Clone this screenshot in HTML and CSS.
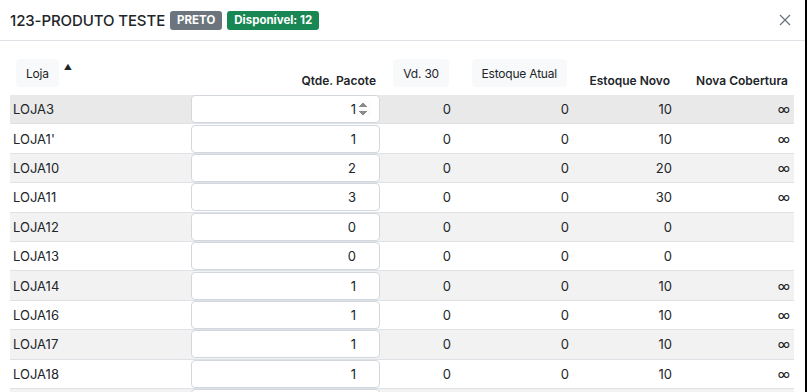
FILE: index.html
```html
<!DOCTYPE html>
<html>
<head>
  <meta charset="UTF-8">
  <title>Distribuição - 123-PRODUTO TESTE</title>
  <link rel="stylesheet" href="styles.css">
</head>
<body>
  <div class="modal">
    <!-- Modal Header -->
    <div class="modal-header">
      <h5 class="modal-title">123-PRODUTO TESTE</h5>
      <span class="badge badge-gray">PRETO</span>
      <span class="badge badge-green">Disponível: 12</span>
      <button class="close-btn" aria-label="Fechar">
        <svg width="12" height="12" viewBox="0 0 12 12"><path d="M1 1L11 11M11 1L1 11" stroke="#6c757d" stroke-width="1.3" fill="none"/></svg>
      </button>
    </div>

    <!-- Modal Body -->
    <div class="modal-body">
      <table class="dist-table">
        <colgroup>
          <col class="c-loja">
          <col class="c-qtde">
          <col class="c-vd">
          <col class="c-atual">
          <col class="c-novo">
          <col class="c-cob">
        </colgroup>
        <thead>
          <tr>
            <th class="left"><button class="sort-btn">Loja</button><span class="sort-arrow">&#9650;</span></th>
            <th>Qtde. Pacote</th>
            <th><button class="sort-btn">Vd. 30</button></th>
            <th><button class="sort-btn">Estoque Atual</button></th>
            <th>Estoque Novo</th>
            <th>Nova Cobertura</th>
          </tr>
        </thead>
        <tbody>
          <tr class="hover">
            <td class="loja">LOJA3</td>
            <td class="qtde"><input type="number" value="1"></td>
            <td>0</td><td>0</td><td>10</td><td class="cob">&infin;</td>
          </tr>
          <tr>
            <td class="loja">LOJA1'</td>
            <td class="qtde"><input type="number" value="1"></td>
            <td>0</td><td>0</td><td>10</td><td class="cob">&infin;</td>
          </tr>
          <tr>
            <td class="loja">LOJA10</td>
            <td class="qtde"><input type="number" value="2"></td>
            <td>0</td><td>0</td><td>20</td><td class="cob">&infin;</td>
          </tr>
          <tr>
            <td class="loja">LOJA11</td>
            <td class="qtde"><input type="number" value="3"></td>
            <td>0</td><td>0</td><td>30</td><td class="cob">&infin;</td>
          </tr>
          <tr>
            <td class="loja">LOJA12</td>
            <td class="qtde"><input type="number" value="0"></td>
            <td>0</td><td>0</td><td>0</td><td class="cob"></td>
          </tr>
          <tr>
            <td class="loja">LOJA13</td>
            <td class="qtde"><input type="number" value="0"></td>
            <td>0</td><td>0</td><td>0</td><td class="cob"></td>
          </tr>
          <tr>
            <td class="loja">LOJA14</td>
            <td class="qtde"><input type="number" value="1"></td>
            <td>0</td><td>0</td><td>10</td><td class="cob">&infin;</td>
          </tr>
          <tr>
            <td class="loja">LOJA16</td>
            <td class="qtde"><input type="number" value="1"></td>
            <td>0</td><td>0</td><td>10</td><td class="cob">&infin;</td>
          </tr>
          <tr>
            <td class="loja">LOJA17</td>
            <td class="qtde"><input type="number" value="1"></td>
            <td>0</td><td>0</td><td>10</td><td class="cob">&infin;</td>
          </tr>
          <tr>
            <td class="loja">LOJA18</td>
            <td class="qtde"><input type="number" value="1"></td>
            <td>0</td><td>0</td><td>10</td><td class="cob">&infin;</td>
          </tr>
          <tr>
            <td class="loja">LOJA19</td>
            <td class="qtde"><input type="number" value="1"></td>
            <td>0</td><td>0</td><td>10</td><td class="cob">&infin;</td>
          </tr>
        </tbody>
      </table>
    </div>
  </div>
</body>
</html>
```

FILE: styles.css
```css
/* Global Styles */
body {
  font-family: Inter, "Noto Sans", sans-serif;
  font-size: 13px;
  margin: 0;
  padding: 0;
  background-color: #fff;
  color: #212529;
  height: 392px;
  overflow: hidden;
}
/* Modal */
.modal {
  width: 805px;
  height: 392px;
  border-right: 2px solid #000;
  background: #fff;
  overflow: hidden;
}
.modal-header {
  display: flex;
  align-items: center;
  height: 40px;
  padding: 0 10px;
  border-bottom: 1px solid #dee2e6;
}
.modal-title {
  margin: 0 5px 0 0;
  font-size: 15px;
  font-weight: 500;
  letter-spacing: -0.1px;
}
.badge {
  display: inline-block;
  height: 19px;
  line-height: 19px;
  padding: 0 7px;
  margin-right: 5px;
  font-size: 11.5px;
  font-weight: 700;
  color: #fff;
  border-radius: 3px;
}
.badge-gray {
  background-color: #6c757d;
}
.badge-green {
  background-color: #198754;
}
.close-btn {
  margin-left: auto;
  margin-right: 4px;
  padding: 0;
  border: none;
  background: none;
  display: flex;
}
.modal-body {
  padding: 0 11px 0 10px;
}
/* Table */
.dist-table {
  width: 784px;
  border-collapse: collapse;
  table-layout: fixed;
}
.c-loja { width: 180px; }
.c-qtde { width: 192px; }
.c-vd { width: 73px; }
.c-atual { width: 118px; }
.c-novo { width: 103px; }
.c-cob { width: 118px; }
.dist-table th {
  height: 47px;
  padding: 0 6px 7px 0;
  vertical-align: bottom;
  text-align: right;
  font-size: 12px;
  font-weight: 600;
  white-space: nowrap;
}
.dist-table th.left {
  text-align: left;
  padding-left: 6px;
}
.sort-btn {
  font-family: inherit;
  font-size: 12px;
  letter-spacing: -0.2px;
  color: #212529;
  background-color: #f8f9fa;
  border: none;
  border-radius: 4px;
  height: 28px;
  padding: 0 10px;
  margin-bottom: 1px;
  cursor: pointer;
  vertical-align: bottom;
}
.sort-arrow {
  display: inline-block;
  font-size: 8px;
  margin-left: 5px;
  vertical-align: 15px;
}
.dist-table td {
  height: 28.4px;
  padding: 0 4px 0 0;
  border-bottom: 1px solid #dee2e6;
  text-align: right;
  vertical-align: middle;
}
.dist-table tbody tr:nth-child(odd) {
  background-color: #f2f2f2;
}
.dist-table tbody tr.hover {
  background-color: #e9e9e9;
}
.dist-table td.loja {
  text-align: left;
  padding-left: 3px;
}
.dist-table td.qtde {
  padding: 0 2px 0 1px;
}
.qtde input {
  display: block;
  box-sizing: border-box;
  width: 100%;
  height: 28px;
  margin: 0;
  padding: 0 8px;
  font-family: inherit;
  font-size: 13px;
  color: #212529;
  text-align: right;
  background: #fff;
  border: 1px solid #d3d8de;
  border-radius: 4px;
}
.qtde input::-webkit-inner-spin-button {
  opacity: 0;
}
.hover .qtde input::-webkit-inner-spin-button {
  opacity: 1;
}
```
